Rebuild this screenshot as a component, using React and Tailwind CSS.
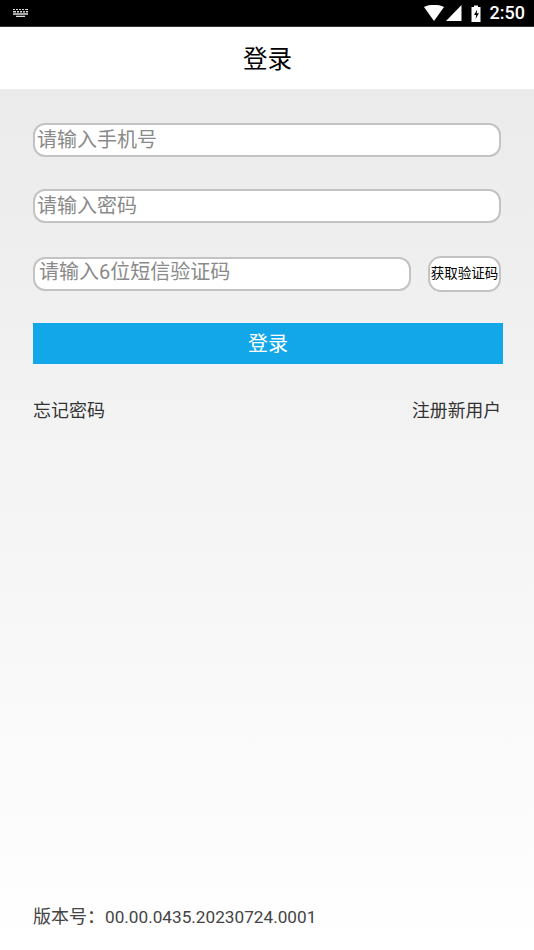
const cjk = { fontFamily: 'Roboto, "Noto Sans CJK SC", sans-serif' };

const StatusBar = () => (
    <div className="h-[27px] bg-black border-b border-[#333] flex items-center justify-between pl-[12px] pr-[9px] text-white">
        <svg width="17" height="9" viewBox="0 0 17 9" fill="#ddd">
            <path d="M1 0h2v1H1zM4 0h2v1H4zM7 0h2v1H7zM10 0h2v1h-2zM13 0h3v1h-3zM1 2h3v1.500H1zM5 2h2v1.500H5zM8 2h2v1.500H8zM11 2h2v1.500h-2zM14 2h2v1.500h-2zM1 4.200h15v1.500H1zM4 6.800h9V8H4z" />
        </svg>
        <div className="flex items-center">
            <svg width="20" height="16" viewBox="0 0 20 16" fill="#fff">
                <path d="M0 2C3 .2 6.400 0 10 0s7 .2 10 2L10 16z" />
            </svg>
            <svg width="16" height="16" viewBox="0 0 16 16" fill="#fff" className="ml-[2px]">
                <path d="M15.500 0V16H0z" />
            </svg>
            <svg width="11" height="17" viewBox="0 0 11 17" className="ml-[9px]">
                <path d="M3 2V.500h4V2h2.500v15H.500V2z" fill="#fff" />
                <path d="M6.200 4.500 3 10h2.200l-.6 4 3.300-5.800H5.700z" fill="#000" />
            </svg>
            <span className="ml-[8px] text-[18px] leading-none font-medium">2:50</span>
        </div>
    </div>
);

const Field = ({ placeholder, className = '', textClass = 'pl-[2px] pb-[1px]' }) => (
    <div className={`h-[34px] bg-white border-2 border-[#c3c3c3] rounded-[12px] flex items-center text-[20px] leading-none text-[#8a8a8a] ${textClass} ${className}`}>
        {placeholder}
    </div>
);

export default function App() {
    return (
        <div className="w-[534px] h-[950px] flex flex-col overflow-hidden" style={cjk}>
            <StatusBar />
            <div className="h-[62px] bg-white flex items-center justify-center pt-[4px] pl-[1px] text-[24.500px] leading-none text-black">登录</div>
            <div className="flex-1 flex flex-col bg-gradient-to-b from-[#ebebeb] to-white pt-[34px] pl-[33px] pr-[31px]">
                <Field placeholder="请输入手机号" className="w-[468px]" />
                <Field placeholder="请输入密码" className="w-[468px] mt-[32px]" />
                <div className="flex items-center w-[468px] mt-[33px]">
                    <Field placeholder="请输入6位短信验证码" className="w-[378px]" textClass="pl-[4px] pb-[5px]" />
                    <div className="ml-[17px] w-[73px] h-[36px] bg-white border-2 border-[#c3c3c3] rounded-[13px] flex items-center justify-center whitespace-nowrap text-[13.500px] leading-none text-black">获取验证码</div>
                </div>
                <div className="w-[470px] h-[41px] mt-[31px] bg-[#12a7e8] flex items-center justify-center text-[20px] leading-none text-white">登录</div>
                <div className="w-[468px] mt-[38px] flex justify-between text-[18px] leading-none text-[#333]">
                    <span>忘记密码</span>
                    <span className="text-[17.800px]">注册新用户</span>
                </div>
                <div className="mt-auto mb-[24px] text-[18px] leading-none text-[#444]">版本号：<span className="text-[17.200px]">00.00.0435.20230724.0001</span></div>
            </div>
        </div>
    );
}
